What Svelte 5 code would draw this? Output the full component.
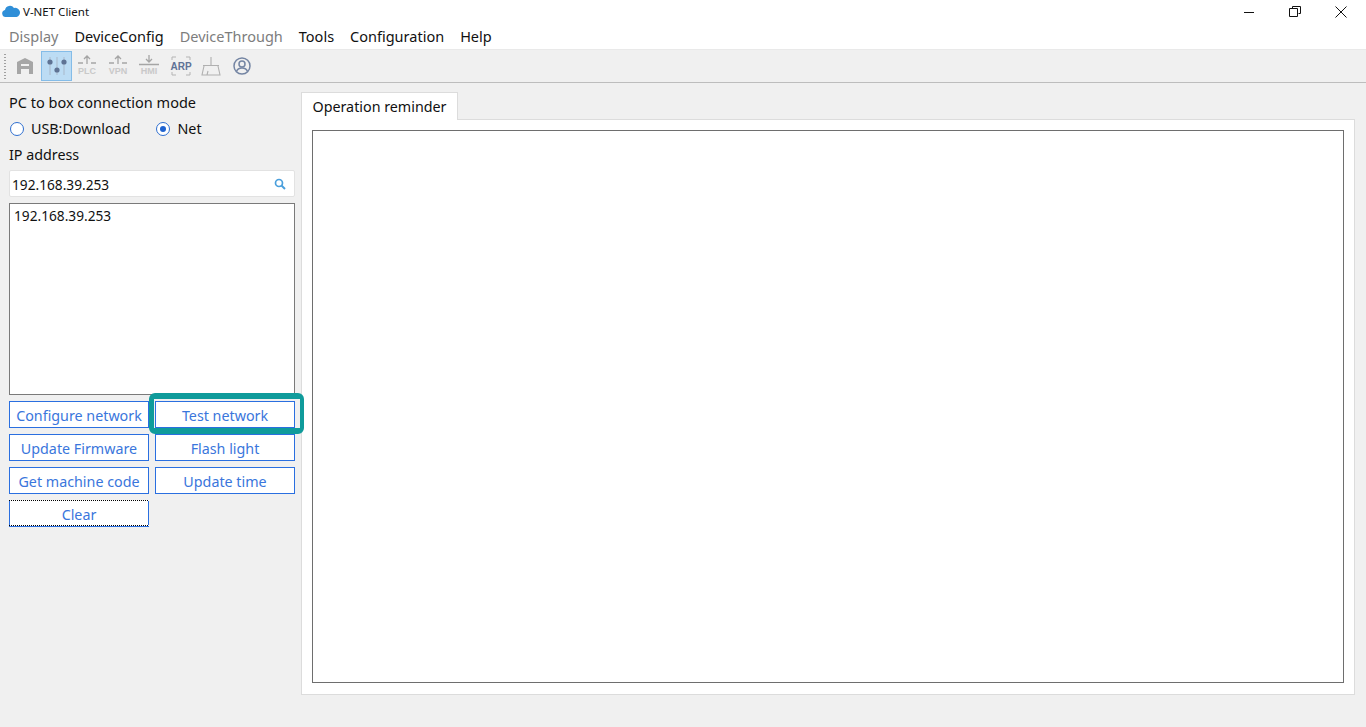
<script>
  const menus = [
    { label: 'Display', off: true },
    { label: 'DeviceConfig' },
    { label: 'DeviceThrough', off: true },
    { label: 'Tools' },
    { label: 'Configuration' },
    { label: 'Help' }
  ];
  const buttons = ['Configure network', 'Test network', 'Update Firmware', 'Flash light', 'Get machine code', 'Update time', 'Clear'];
</script>

<div class="window">
  <header class="title">
    <svg class="cloud" width="18" height="12" viewBox="0 0 18 12"><path d="M4 12a3.6 3.6 0 0 1-1-7.1A5 5 0 0 1 12 3a4.3 4.3 0 0 1 2.600 9z" fill="#2f8fd8"/></svg>
    <span class="title-text">V-NET Client</span>
    <div class="controls">
      <svg width="12" height="12" viewBox="0 0 12 12"><path d="M1 6.500h10" stroke="#111" fill="none"/></svg>
      <svg width="12" height="12" viewBox="0 0 12 12"><path d="M3.500 2.500V.5h8v7h-2M.5 2.500h8v8h-8z" stroke="#111" fill="none"/></svg>
      <svg width="12" height="12" viewBox="0 0 12 12"><path d="M.5.5l11 11M11.500.5l-11 11" stroke="#111" fill="none"/></svg>
    </div>
  </header>

  <nav class="menu">
    {#each menus as m}
      <span class:off={m.off}>{m.label}</span>
    {/each}
  </nav>

  <div class="toolbar">
    <span class="grip"></span>
    <span class="tool">
      <svg width="20" height="20" viewBox="1 0 20 20"><path d="M2 18V6l8-4 8 4v12h-4v-5H6v5zM6 8v2h8V8z" fill="#a6a6a6" fill-rule="evenodd"/></svg>
    </span>
    <span class="tool active">
      <svg width="22" height="24" viewBox="0 0 22 24"><path d="M4 3v18M11 3v18M18 3v18" stroke="#a9b8ca" stroke-width="1"/><circle cx="4" cy="8" r="2.600" fill="#5f7394"/><circle cx="18" cy="8" r="2.600" fill="#5f7394"/><circle cx="11" cy="16" r="2.600" fill="#5f7394"/></svg>
    </span>
    <span class="tool">
      <svg width="22" height="22" viewBox="1 1 22 22"><path d="M11 2v8M8 5l3-3 3 3M2 9h5M15 9h5" stroke="#a5a5a5" stroke-width="1.300" fill="none"/><text x="11" y="20" class="ico-t">PLC</text></svg>
    </span>
    <span class="tool">
      <svg width="22" height="22" viewBox="1 1 22 22"><path d="M11 2v8M8 5l3-3 3 3M2 9h5M15 9h5" stroke="#a5a5a5" stroke-width="1.300" fill="none"/><text x="11" y="20" class="ico-t">VPN</text></svg>
    </span>
    <span class="tool">
      <svg width="22" height="22" viewBox="1 1 22 22"><path d="M11 1v7M8 5l3 3 3-3M1 10.500h20" stroke="#a5a5a5" stroke-width="1.300" fill="none"/><text x="11" y="20" class="ico-t">HMI</text></svg>
    </span>
    <span class="tool">
      <svg width="22" height="22" viewBox="0 0 22 22"><path d="M2 5V2h4M16 2h4v3M2 17v3h4M16 20h4v-3" stroke="#b4b4b4" fill="none"/><text x="11" y="15" class="ico-a">ARP</text></svg>
    </span>
    <span class="tool">
      <svg width="22" height="22" viewBox="1 0 22 22"><path d="M11 2v8M3 10.500h16M4 11l-2 9h18l-2-9M7 20l1-4" stroke="#b0b0b0" stroke-width="1.100" fill="none"/></svg>
    </span>
    <span class="tool">
      <svg width="20" height="20" viewBox="1 0 20 20"><circle cx="10" cy="10" r="8" stroke="#7485a3" stroke-width="1.500" fill="none"/><circle cx="10" cy="8" r="3" stroke="#7485a3" stroke-width="1.500" fill="none"/><path d="M4.500 15.500c1-3 3-3.500 5.500-3.500s4.500.5 5.500 3.500" stroke="#7485a3" stroke-width="1.500" fill="none"/></svg>
    </span>
  </div>

  <div class="body">
    <aside class="side">
      <div class="label mode">PC to box connection mode</div>
      <div class="radios">
        <span class="radio"><i></i>USB:Download</span>
        <span class="radio on"><i></i>Net</span>
      </div>
      <div class="label ip">IP address</div>
      <div class="search">
        <span>192.168.39.253</span>
        <svg width="12" height="12" viewBox="0 0 12 12"><circle cx="5" cy="5" r="3.500" stroke="#4a9fdc" stroke-width="1.700" fill="none"/><path d="M7.500 7.500l3.500 3.500" stroke="#4a9fdc" stroke-width="2"/></svg>
      </div>
      <div class="list">192.168.39.253</div>
      <div class="btns">
        {#each buttons as b}
          <button class:focus={b === 'Clear'} class:hl={b === 'Test network'}>{b}</button>
        {/each}
      </div>
    </aside>

    <main class="main">
      <div class="tab">Operation reminder</div>
      <div class="pane"><div class="inner"></div></div>
    </main>
  </div>
</div>

<style>
  :global(body) {
    margin: 0;
    background: #f0f0f0;
  }
  .window {
    height: 727px;
    width: 1366px;
    overflow: hidden;
    display: flex;
    flex-direction: column;
    background: #f0f0f0;
    font-family: "Noto Sans", "Open Sans", sans-serif;
    font-size: 13.700px;
    color: #111;
  }
  .title {
    height: 22px;
    background: #fff;
    display: flex;
    align-items: center;
    padding-left: 2px;
    flex: none;
  }
  .title-text {
    font-size: 11.500px;
    margin-left: 3px;
  }
  .controls {
    margin-left: auto;
    margin-top: 2px;
    display: flex;
    gap: 34px;
    padding-right: 19px;
  }
  .menu {
    height: 27px;
    background: #fff;
    display: flex;
    gap: 16px;
    padding-left: 9px;
    align-items: center;
    font-size: 14.500px;
    flex: none;
    border-bottom: 1px solid #e9e9e9;
  }
  .menu .off {
    color: #7d7d7d;
  }
  .toolbar {
    height: 32px;
    display: flex;
    align-items: center;
    border-bottom: 1px solid #bdbdbd;
    background: #f0f0f0;
    padding-left: 4px;
    flex: none;
  }
  .grip {
    width: 2px;
    height: 26px;
    margin-right: 4px;
    background-image: radial-gradient(circle, #a0a0a0 0.8px, transparent 1px);
    background-size: 2px 3px;
  }
  .tool {
    width: 31px;
    height: 30px;
    display: flex;
    align-items: center;
    justify-content: center;
    box-sizing: border-box;
  }
  .tool.active {
    background: #bcdcf4;
    border: 1px solid #84bce8;
  }
  .ico-t {
    font: 700 9px "Liberation Sans", sans-serif;
    fill: #c9c9c9;
    text-anchor: middle;
  }
  .ico-a {
    font: 700 10px "Liberation Sans", sans-serif;
    fill: #5f7296;
    text-anchor: middle;
  }
  .body {
    flex: 1;
    display: flex;
    min-height: 0;
  }
  .side {
    width: 286px;
    margin-left: 9px;
    padding-top: 8px;
    flex: none;
    position: relative;
  }
  .label {
    line-height: 22px;
    font-size: 14.300px;
  }
  .label.mode {
    font-size: 14.500px;
  }
  .radios {
    display: flex;
    gap: 25px;
    margin-top: 5px;
    line-height: 22px;
    font-size: 14.300px;
  }
  .radio {
    display: flex;
    align-items: center;
    gap: 7px;
    padding-left: 1px;
  }
  .radio i {
    width: 12px;
    height: 12px;
    border: 1px solid #2f6fd0;
    border-radius: 50%;
    background: #fff;
    display: block;
    position: relative;
  }
  .radio.on i::after {
    content: "";
    position: absolute;
    inset: 3px;
    border-radius: 50%;
    background: #1f63d0;
  }
  .label.ip {
    margin-top: 4px;
  }
  .search {
    height: 27px;
    margin-top: 4px;
    background: #fff;
    border: 1px solid #e2e2e2;
    border-radius: 2px;
    box-sizing: border-box;
    display: flex;
    align-items: center;
    justify-content: space-between;
    padding: 1px 8px 0 2px;
  }
  .list {
    height: 192px;
    margin-top: 6px;
    box-sizing: border-box;
    background: #fff;
    border: 1px solid #7a7a7a;
    padding: 2px 4px;
    line-height: 20px;
  }
  .btns {
    margin-top: 6px;
    display: grid;
    grid-template-columns: 140px 140px;
    column-gap: 6px;
    row-gap: 6px;
  }
  button {
    height: 27px;
    padding: 2px 0 0;
    background: #fff;
    border: 1px solid #2a6fe0;
    color: #3a76dc;
    font: inherit;
    font-size: 14.300px;
    position: relative;
  }
  button.focus::before {
    content: "";
    position: absolute;
    inset: -1px -1px 0;
    background:
      repeating-linear-gradient(90deg, #000 0 1px, #fff 1px 2px) top / 100% 1px no-repeat,
      repeating-linear-gradient(90deg, #000 0 1px, #fff 1px 2px) bottom / 100% 1px no-repeat;
  }
  button.hl::after {
    content: "";
    position: absolute;
    inset: -9px -10px -7px -7px;
    border-style: solid;
    border-color: #0f9b9b;
    border-width: 6px 4px 6px 5px;
    border-radius: 6px;
    box-sizing: border-box;
  }
  .main {
    margin-left: 6px;
    margin-top: 9px;
    width: 1054px;
    flex: none;
    display: flex;
    flex-direction: column;
  }
  .tab {
    width: 157px;
    height: 28px;
    box-sizing: border-box;
    background: #fff;
    border: 1px solid #dcdcdc;
    border-bottom: 0;
    text-align: center;
    line-height: 27px;
    font-size: 14.300px;
    position: relative;
    z-index: 1;
    margin-bottom: -1px;
  }
  .pane {
    height: 576px;
    background: #fff;
    border: 1px solid #dcdcdc;
    box-sizing: border-box;
    padding: 10px;
  }
  .inner {
    height: 553px;
    box-sizing: border-box;
    border: 1px solid #6e6e6e;
    background: #fff;
  }
</style>
